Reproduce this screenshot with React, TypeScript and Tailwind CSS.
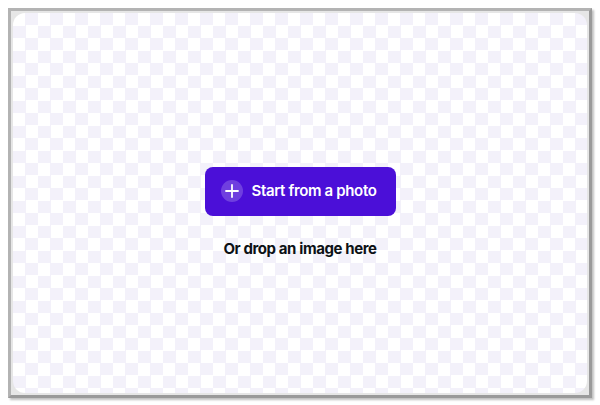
import React from 'react';

const App: React.FC = () => {
  return (
    <div className="w-[600px] h-[405px] bg-white p-[8px] font-['Inter',sans-serif]">
      <div className="w-[584px] h-[390px] border-[3px] border-[#b3b3b3] border-r-[#9a9a9a] border-b-[#9a9a9a] bg-[#e6e6e6] p-[2px] shadow-[2px_2px_2px_rgba(0,0,0,0.25)]">
        <div className="w-full h-full rounded-[12px] overflow-hidden bg-white bg-[conic-gradient(#f3f1fa_25%,#ffffff_0_50%,#f3f1fa_0_75%,#ffffff_0)] bg-size-[25px_25px] flex flex-col items-center justify-center pt-[21px]">
          <button className="w-[191px] h-[49px] rounded-[8px] bg-[#4b0fd8] flex items-center pl-[16px] gap-[9px] text-white">
            <span className="w-[22px] h-[22px] rounded-full bg-white/20 flex items-center justify-center">
              <svg width="14" height="14" viewBox="0 0 14 14" fill="none">
                <path d="M7 1v12M1 7h12" stroke="white" strokeWidth="1.8" strokeLinecap="round" />
              </svg>
            </span>
            <span className="text-[15px] font-semibold tracking-[-0.35px]">Start from a photo</span>
          </button>
          <p className="mt-[22px] text-[15px] font-bold tracking-[-0.4px] text-[#0d1216]">Or drop an image here</p>
        </div>
      </div>
    </div>
  );
};

export default App;
